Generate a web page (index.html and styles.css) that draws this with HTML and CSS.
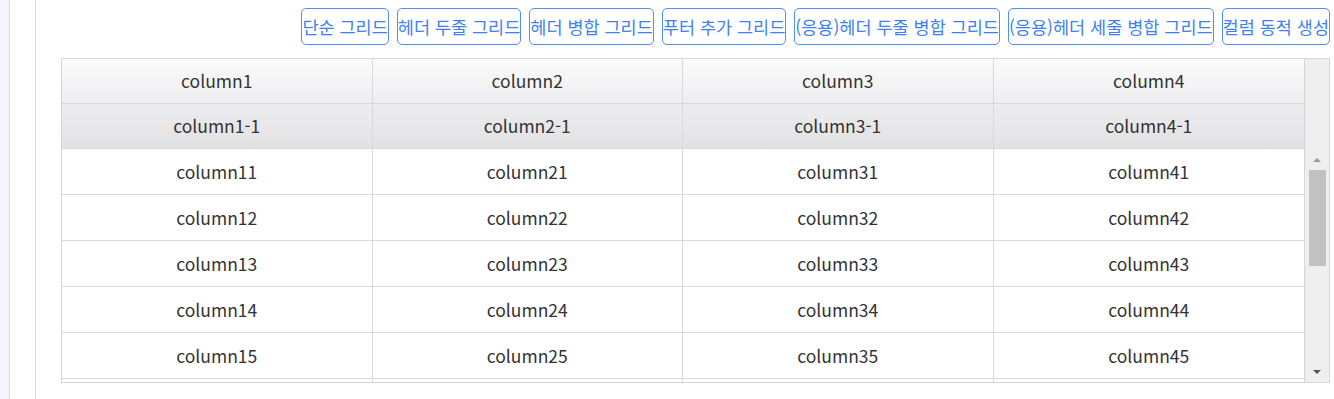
FILE: index.html
```html
<!DOCTYPE html>
<html lang="ko">
<head>
<meta charset="utf-8">
<title>Grid</title>
<link rel="stylesheet" href="styles.css">
</head>
<body>
<div class="page">
  <aside class="sidebar"></aside>
  <div class="gutter"></div>
  <main class="content">
    <div class="toolbar">
      <button class="btn">단순 그리드</button>
      <button class="btn">헤더 두줄 그리드</button>
      <button class="btn">헤더 병합 그리드</button>
      <button class="btn">푸터 추가 그리드</button>
      <button class="btn">(응용)헤더 두줄 병합 그리드</button>
      <button class="btn">(응용)헤더 세줄 병합 그리드</button>
      <button class="btn">컬럼 동적 생성</button>
    </div>
    <div class="grid">
      <div class="grid-main">
        <div class="row head head1">
          <div class="cell">column1</div><div class="cell">column2</div><div class="cell">column3</div><div class="cell">column4</div>
        </div>
        <div class="row head head2">
          <div class="cell">column1-1</div><div class="cell">column2-1</div><div class="cell">column3-1</div><div class="cell">column4-1</div>
        </div>
        <div class="body">
          <div class="row"><div class="cell">column11</div><div class="cell">column21</div><div class="cell">column31</div><div class="cell">column41</div></div>
          <div class="row"><div class="cell">column12</div><div class="cell">column22</div><div class="cell">column32</div><div class="cell">column42</div></div>
          <div class="row"><div class="cell">column13</div><div class="cell">column23</div><div class="cell">column33</div><div class="cell">column43</div></div>
          <div class="row"><div class="cell">column14</div><div class="cell">column24</div><div class="cell">column34</div><div class="cell">column44</div></div>
          <div class="row"><div class="cell">column15</div><div class="cell">column25</div><div class="cell">column35</div><div class="cell">column45</div></div>
          <div class="row"><div class="cell"></div><div class="cell"></div><div class="cell"></div><div class="cell"></div></div>
        </div>
      </div>
      <div class="vscroll">
        <div class="vscroll-head"></div>
        <div class="track">
          <span class="arrow up"></span>
          <span class="thumb"></span>
          <span class="spacer"></span>
          <span class="arrow down"></span>
        </div>
      </div>
    </div>
  </main>
</div>
</body>
</html>
```

FILE: styles.css
```css
html, body {
  margin: 0;
  padding: 0;
  background: #ffffff;
}

body {
  font-family: "Noto Sans CJK KR", "Noto Sans", sans-serif;
  color: #333333;
}

.page {
  display: flex;
  height: 399px;
  overflow: hidden;
}

.sidebar {
  width: 9px;
  flex: none;
  background: #f3f6fa;
  border-right: 1px solid #d9d9d9;
}

.gutter {
  width: 25px;
  flex: none;
  border-right: 1px solid #d9d9d9;
}

.content {
  flex: 1;
  min-width: 0;
  padding: 8px 4px 0 25px;
}

.toolbar {
  display: flex;
  justify-content: flex-end;
  gap: 8px;
  margin-bottom: 13px;
}

.btn {
  height: 37px;
  padding: 0;
  margin: 0;
  border: 1px solid #4f8ff7;
  border-radius: 5px;
  background: #ffffff;
  color: #3e7ff2;
  font-family: "Noto Sans CJK KR", "Noto Sans", sans-serif;
  font-size: 17.5px;
  line-height: 22px;
  white-space: nowrap;
  cursor: pointer;
}

.grid {
  display: flex;
  height: 325px;
  box-sizing: border-box;
  border: 1px solid #d6d6d6;
}

.grid-main {
  flex: 1;
  min-width: 0;
  display: flex;
  flex-direction: column;
}

.row {
  display: grid;
  grid-template-columns: repeat(4, 1fr);
  height: 46px;
  box-sizing: border-box;
  border-bottom: 1px solid #d9d9d9;
  flex: none;
}

.cell {
  display: flex;
  align-items: center;
  justify-content: center;
  font-size: 17.5px;
  color: #333333;
  border-right: 1px solid #d9d9d9;
  white-space: nowrap;
}

.cell:last-child {
  border-right: none;
}

.head {
  height: 45px;
}

.head .cell {
  padding-bottom: 1px;
}

.head1 {
  background: linear-gradient(to bottom, #fbfbfc, #eeeef0);
}

.head2 {
  background: linear-gradient(to bottom, #ededef, #e2e2e4);
}

.body {
  flex: 1;
  overflow: hidden;
  display: flex;
  flex-direction: column;
}

.vscroll {
  width: 24px;
  flex: none;
  background: #efefef;
  border-left: 1px solid #d6d6d6;
  display: flex;
  flex-direction: column;
}

.vscroll-head {
  height: 90px;
  flex: none;
}

.track {
  flex: 1;
  display: flex;
  flex-direction: column;
  align-items: center;
  padding: 9px 0 8px;
}

.arrow {
  width: 0;
  height: 0;
  border-left: 4px solid transparent;
  border-right: 4px solid transparent;
}

.arrow.up {
  border-bottom: 4px solid #9a9a9a;
}

.arrow.down {
  border-top: 4px solid #555555;
}

.thumb {
  width: 17px;
  height: 96px;
  margin-top: 8px;
  background: #c1c1c1;
}

.spacer {
  flex: 1;
}
```
